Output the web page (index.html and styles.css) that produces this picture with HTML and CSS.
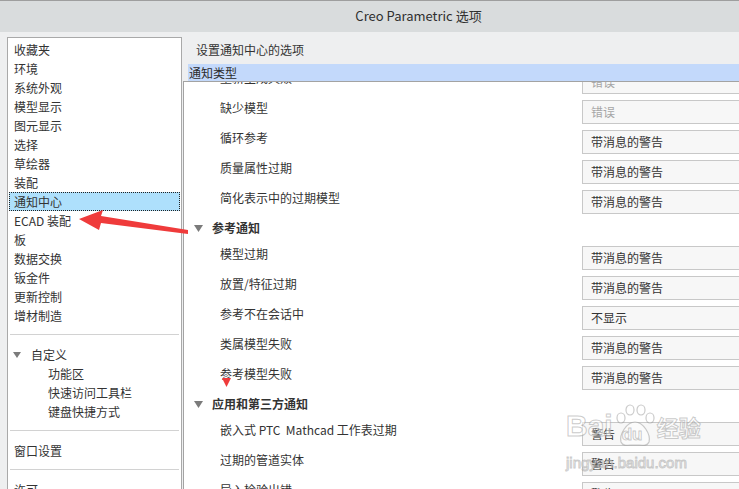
FILE: index.html
```html
<!DOCTYPE html>
<html lang="zh-CN">
<head>
    <meta charset="UTF-8">
    <title>Creo Parametric 选项</title>
    <link rel="stylesheet" href="styles.css">
</head>
<body>
    <div class="titlebar">Creo Parametric 选项</div>

    <div class="main">
        <div class="nav">
            <div class="nav-item">收藏夹</div>
            <div class="nav-item">环境</div>
            <div class="nav-item">系统外观</div>
            <div class="nav-item">模型显示</div>
            <div class="nav-item">图元显示</div>
            <div class="nav-item">选择</div>
            <div class="nav-item">草绘器</div>
            <div class="nav-item">装配</div>
            <div class="nav-item selected">通知中心</div>
            <div class="nav-item">ECAD 装配</div>
            <div class="nav-item">板</div>
            <div class="nav-item">数据交换</div>
            <div class="nav-item">钣金件</div>
            <div class="nav-item">更新控制</div>
            <div class="nav-item">增材制造</div>
            <div class="sep"></div>
            <div class="nav-group">
                <svg class="tri" width="8" height="6" viewBox="0 0 8 6"><polygon points="0,0 8,0 4,6" fill="#7b7b7b"/></svg>
                自定义
            </div>
            <div class="nav-sub">功能区</div>
            <div class="nav-sub">快速访问工具栏</div>
            <div class="nav-sub">键盘快捷方式</div>
            <div class="sep"></div>
            <div class="nav-item">窗口设置</div>
            <div class="sep"></div>
            <div class="nav-item">许可</div>
        </div>

        <div class="pane">
            <div class="pane-title">设置通知中心的选项</div>
            <div class="section-bar">通知类型</div>
            <div class="scroll">
                <div class="list">
                    <div class="row"><div class="label">重新生成失败</div><div class="select disabled">错误</div></div>
                    <div class="row"><div class="label">缺少模型</div><div class="select disabled">错误</div></div>
                    <div class="row"><div class="label">循环参考</div><div class="select">带消息的警告</div></div>
                    <div class="row"><div class="label">质量属性过期</div><div class="select">带消息的警告</div></div>
                    <div class="row"><div class="label">简化表示中的过期模型</div><div class="select">带消息的警告</div></div>

                    <div class="group-head">
                        <svg class="tri" width="9" height="7" viewBox="0 0 9 7"><polygon points="0,0 9,0 4.5,7" fill="#7b7b7b"/></svg>
                        参考通知
                    </div>
                    <div class="row"><div class="label">模型过期</div><div class="select">带消息的警告</div></div>
                    <div class="row"><div class="label">放置/特征过期</div><div class="select">带消息的警告</div></div>
                    <div class="row"><div class="label">参考不在会话中</div><div class="select">不显示</div></div>
                    <div class="row"><div class="label">类属模型失败</div><div class="select">带消息的警告</div></div>
                    <div class="row"><div class="label">参考模型失败</div><div class="select">带消息的警告</div></div>

                    <div class="group-head">
                        <svg class="tri" width="9" height="7" viewBox="0 0 9 7"><polygon points="0,0 9,0 4.5,7" fill="#7b7b7b"/></svg>
                        应用和第三方通知
                    </div>
                    <div class="row"><div class="label">嵌入式 PTC&nbsp; Mathcad 工作表过期</div><div class="select">警告</div></div>
                    <div class="row"><div class="label">过期的管道实体</div><div class="select">警告</div></div>
                    <div class="row"><div class="label">导入检验出错</div><div class="select">警告</div></div>
                </div>
            </div>
        </div>
    </div>

    <!-- red annotation marks drawn on top of the screenshot -->
    <svg class="marks" width="739" height="489" viewBox="0 0 739 489">
        <polygon points="79,219 103,210 101,216 188,230 188,234 101,223 99,230" fill="#ef3b3b"/>
        <polygon points="222,378 231,378 226.5,387" fill="#ef3b3b"/>
    </svg>

    <div class="watermark">
        <span class="wm-big">Bai</span><span class="paw">
            <svg width="44" height="44" viewBox="0 0 44 44">
                <g fill="rgba(255,255,255,0.5)" stroke="rgba(140,140,140,0.45)" stroke-width="1.2">
                    <ellipse cx="8" cy="14" rx="4" ry="5"/>
                    <ellipse cx="17" cy="6" rx="4" ry="5"/>
                    <ellipse cx="28" cy="6" rx="4" ry="5"/>
                    <ellipse cx="37" cy="14" rx="4" ry="5"/>
                    <path d="M22 18 C30 18 38 30 36 38 C34 43 28 41 22 41 C16 41 10 43 8 38 C6 30 14 18 22 18 Z"/>
                </g>
            </svg>
            <span class="wm-du">du</span>
        </span><span class="wm-cn">经验</span>
        <div class="wm-url">jingyan.baidu.com</div>
    </div>
</body>
</html>
```

FILE: styles.css
```css
* {
    box-sizing: border-box;
}
body {
    margin: 0;
    width: 739px;
    height: 489px;
    overflow: hidden;
    position: relative;
    background: #eeeff0;
    font-family: "Noto Sans CJK SC", "Noto Sans", sans-serif;
    font-size: 12px;
    color: #333;
}
.titlebar {
    height: 32px;
    border-top: 1px solid #9e9e9e;
    background: #d9dcdd;
    text-align: center;
    padding-left: 98px;
    font-size: 13px;
    line-height: 30px;
    color: #2f2f2f;
}
.main {
    display: flex;
    height: 457px;
    overflow: hidden;
    padding-left: 7px;
}

/* left category list */
.nav {
    flex: none;
    width: 175px;
    height: 480px;
    margin-top: 5px;
    padding-top: 2px;
    background: #fff;
    border: 1px solid #a9a9a9;
}
.nav-item {
    height: 19px;
    line-height: 19px;
    padding-left: 6px;
    white-space: nowrap;
}
.nav-item.selected {
    margin: 0 1px;
    padding-left: 4px;
    line-height: 17px;
    background: #aee0fc;
    border: 1px dotted #222;
}
.sep {
    height: 1px;
    margin: 9px 2px 10px;
    background: #d2d2d2;
}
.nav-group {
    display: flex;
    align-items: center;
    height: 19px;
    padding-left: 5px;
}
.nav-group .tri {
    margin-right: 10px;
}
.nav-sub {
    height: 19px;
    line-height: 19px;
    padding-left: 40px;
}

/* right options pane */
.pane {
    flex: 1;
    display: flex;
    flex-direction: column;
    margin-left: 1px;
    min-width: 0;
}
.pane-title {
    padding: 10px 0 0 13px;
    line-height: 16px;
}
.section-bar {
    height: 17px;
    margin: 6px 0 0 5px;
    padding-left: 1px;
    line-height: 17px;
    background: #c3d9fb;
    color: #2b2b2b;
}
.scroll {
    flex: 1;
    overflow: hidden;
    background: #fff;
    border-top: 1px solid #a3a3a3;
    border-left: 1px solid #a3a3a3;
}
.list {
    margin-top: -12px;
}
.row {
    display: flex;
    height: 24px;
    margin-bottom: 6px;
}
.label {
    flex: none;
    width: 398px;
    padding-left: 36px;
    line-height: 16px;
    white-space: nowrap;
}
.select {
    flex: none;
    width: 200px;
    height: 24px;
    padding-left: 8px;
    line-height: 22px;
    background: #f7f7f7;
    border: 1px solid #c8c8c8;
}
.select.disabled {
    color: #a6a6a6;
}
.group-head {
    display: flex;
    align-items: flex-start;
    height: 26px;
    padding-left: 10px;
    line-height: 16px;
    font-weight: bold;
}
.group-head .tri {
    margin: 5px 9px 0 0;
}

/* overlays */
.marks {
    position: absolute;
    left: 0;
    top: 0;
    pointer-events: none;
}
.watermark {
    position: absolute;
    left: 566px;
    top: 404px;
    width: 140px;
    pointer-events: none;
    font-family: "Liberation Sans", sans-serif;
    font-weight: bold;
    color: rgba(255, 255, 255, 0.55);
    -webkit-text-stroke: 1px rgba(140, 140, 140, 0.45);
    white-space: nowrap;
}
.wm-big {
    display: inline-block;
    font-size: 30px;
    vertical-align: bottom;
    line-height: 44px;
}
.paw {
    display: inline-block;
    position: relative;
    width: 44px;
    height: 44px;
    vertical-align: bottom;
}
.wm-du {
    position: absolute;
    left: 9px;
    top: 21px;
    font-size: 17px;
    line-height: 20px;
}
.wm-cn {
    display: inline-block;
    font-family: "Noto Sans CJK SC", sans-serif;
    font-size: 22px;
    line-height: 44px;
    vertical-align: bottom;
}
.wm-url {
    font-size: 15px;
    line-height: 18px;
    margin-top: 6px;
    font-weight: normal;
}
```
